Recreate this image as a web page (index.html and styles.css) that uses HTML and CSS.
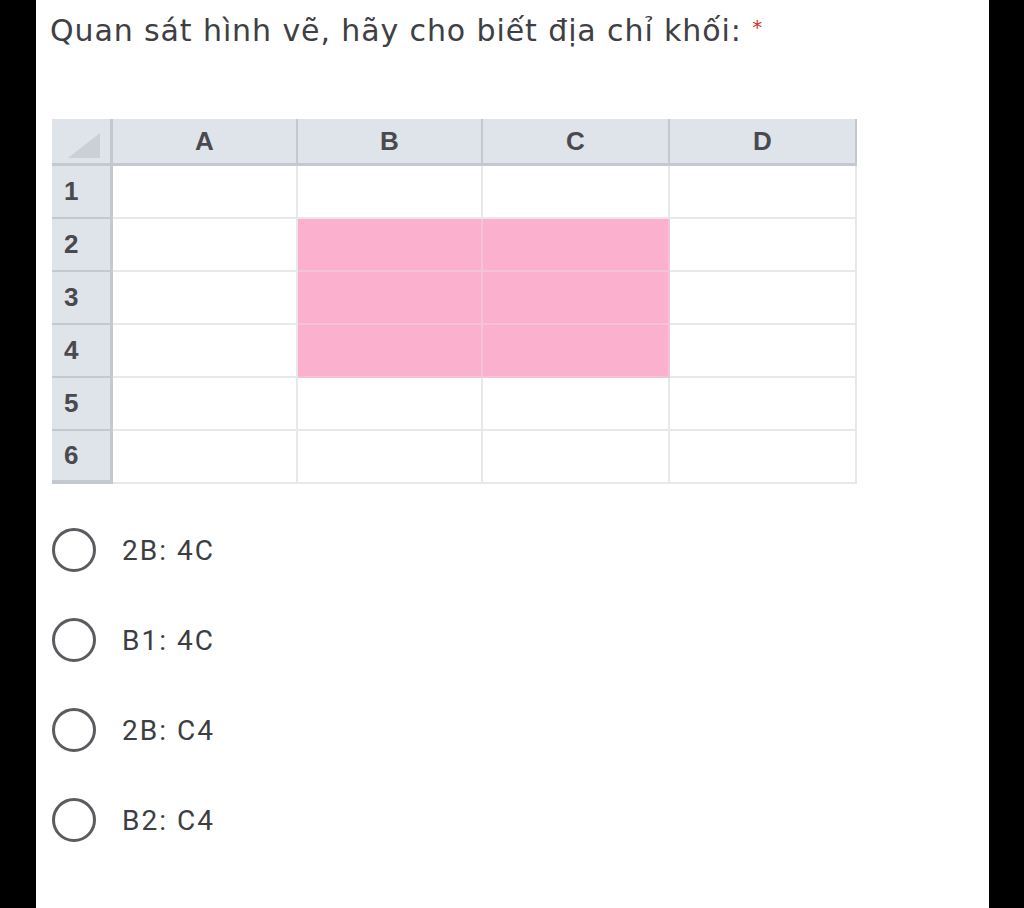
FILE: index.html
```html
<!DOCTYPE html>
<html lang="vi">
<head>
  <meta charset="UTF-8">
  <meta name="viewport" content="width=device-width, initial-scale=1.0">
  <title>Câu hỏi</title>
  <link rel="stylesheet" href="styles.css">
</head>
<body>
  <div class="page">
    <h1 class="question">Quan sát hình vẽ, hãy cho biết địa chỉ khối: <span class="required">*</span></h1>

    <!-- Bảng tính -->
    <div class="sheet">
      <div class="corner"><span class="tri"></span></div>
      <div class="col-head">A</div>
      <div class="col-head">B</div>
      <div class="col-head">C</div>
      <div class="col-head">D</div>

      <div class="row-head">1</div>
      <div class="cell"></div><div class="cell"></div><div class="cell"></div><div class="cell"></div>

      <div class="row-head">2</div>
      <div class="cell"></div><div class="cell pink"></div><div class="cell pink"></div><div class="cell"></div>

      <div class="row-head">3</div>
      <div class="cell"></div><div class="cell pink"></div><div class="cell pink"></div><div class="cell"></div>

      <div class="row-head">4</div>
      <div class="cell"></div><div class="cell pink"></div><div class="cell pink"></div><div class="cell"></div>

      <div class="row-head">5</div>
      <div class="cell"></div><div class="cell"></div><div class="cell"></div><div class="cell"></div>

      <div class="row-head last">6</div>
      <div class="cell"></div><div class="cell"></div><div class="cell"></div><div class="cell"></div>
    </div>

    <div class="options">
      <label class="option"><span class="radio"></span>2B: 4C</label>
      <label class="option"><span class="radio"></span>B1: 4C</label>
      <label class="option"><span class="radio"></span>2B: C4</label>
      <label class="option"><span class="radio"></span>B2: C4</label>
    </div>
  </div>
</body>
</html>
```

FILE: styles.css
```css
html, body {
  margin: 0;
  padding: 0;
  height: 100%;
}

body {
  background-color: #000;
}

.page {
  background-color: #fff;
  margin: 0 35px 0 36px;
  min-height: 100%;
  padding: 8px 0 0 14px;
  box-sizing: border-box;
}

.question {
  font-family: "DejaVu Sans", Arial, sans-serif;
  font-weight: normal;
  font-size: 30px;
  letter-spacing: 0.9px;
  color: #3e4044;
  margin: 0;
  line-height: 38px;
}

.required {
  color: #d93025;
  font-size: 20px;
  vertical-align: 7px;
}

/* Bảng tính */
.sheet {
  display: grid;
  grid-template-columns: 61px 185px 185px 187px 187px;
  grid-template-rows: 47px repeat(6, 53px);
  margin: 69px 0 0 2px;
  width: 805px;
  font-family: "Liberation Sans", Arial, sans-serif;
  font-weight: bold;
  font-size: 26px;
  color: #4a4a4e;
}

.corner {
  background-color: #dfe3ea;
  border-right: 3px solid #c4c8cf;
  border-bottom: 3px solid #c4c8cf;
  position: relative;
}

.tri {
  position: absolute;
  right: 10px;
  bottom: 5px;
  width: 0;
  height: 0;
  border-left: 32px solid transparent;
  border-bottom: 25px solid #cbcfd6;
}

.col-head {
  background-color: #dfe3ea;
  border-right: 2px solid #c4c8cf;
  border-bottom: 3px solid #c4c8cf;
  display: flex;
  align-items: center;
  justify-content: center;
}

.row-head {
  background-color: #dfe3ea;
  border-right: 3px solid #c4c8cf;
  border-bottom: 2px solid #c4c8cf;
  display: flex;
  align-items: center;
  padding-left: 12px;
}

.row-head.last {
  border-bottom: 4px solid #c4c8cf;
}

.cell {
  border-right: 2px solid #e6e8ec;
  border-bottom: 2px solid #e6e8ec;
}

.cell.pink {
  background-color: #fbb0cd;
  border-color: #f5c3d8;
}

/* Lựa chọn */
.options {
  display: flex;
  flex-direction: column;
  gap: 46px;
  margin-top: 44px;
  padding-left: 2px;
}

.option {
  display: flex;
  align-items: center;
  gap: 26px;
  font-family: Roboto, Arial, sans-serif;
  font-size: 28px;
  letter-spacing: 2px;
  color: #3c3e42;
  height: 44px;
}

.radio {
  width: 38px;
  height: 38px;
  border: 3px solid #5a5c60;
  border-radius: 50%;
}
```
